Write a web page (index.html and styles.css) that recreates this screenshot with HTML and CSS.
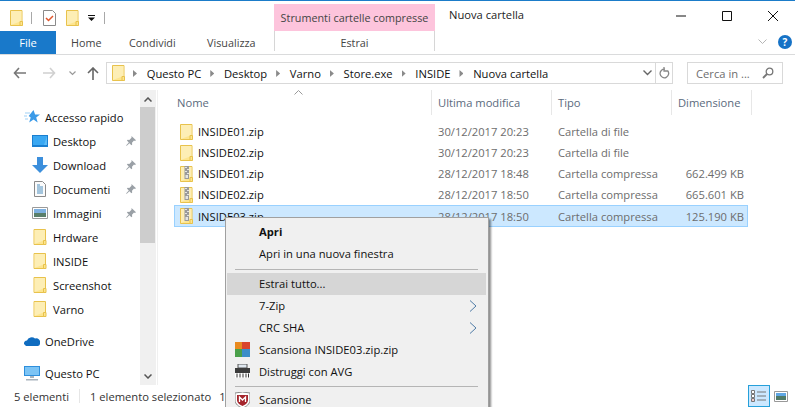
FILE: index.html
```html
<!DOCTYPE html>
<html lang="it">
<head>
<meta charset="utf-8">
<title>Nuova cartella</title>
<link rel="stylesheet" href="styles.css">
</head>
<body>
<svg class="defs" width="0" height="0" aria-hidden="true">
  <symbol id="folder" viewBox="0 0 13 16">
    <path d="M.5.5h11.500v15H.5z" fill="#fde58f" stroke="#e8c24c"/>
    <path d="M1 1h10.500v10L1 15z" fill="#fdeeb5"/>
    <path d="M10 11.500h2.500v4H10z" fill="#fde58f" stroke="#e8c24c"/>
  </symbol>
  <symbol id="zip" viewBox="0 0 13 16">
    <path d="M.5.5h11.500v15H.5z" fill="#fde58f" stroke="#e8c24c"/>
    <path d="M1 1h10.500v10L1 15z" fill="#fdeeb5"/>
    <path d="M4.500 0h4.500v13H4.500z" fill="#9a9a9a"/>
    <path d="M5 1h2v1H5zM7 3h2v1H7zM5 5h2v1H5zM7 7h2v1H7zM5.500 9h2.500v3H5.500z" fill="#e4e4e4"/>
    <path d="M10 11.500h2.500v4H10z" fill="#fde58f" stroke="#e8c24c"/>
  </symbol>
  <symbol id="pin" viewBox="0 0 10 10">
    <path d="M5.500 0l4.500 4.200-1.100.7-.9-.3L6 6.800l.2 1.700-.8.700-2-2L.8 9.700 0 9.500 2.800 6.400.9 4.500l.8-.8 1.600.2L5.500 1.800z" fill="#9aa0a6"/>
  </symbol>
</svg>
<div class="window">
  <header class="titlebar">
    <div class="qat">
      <svg class="qat-folder" width="13" height="16"><use href="#folder"/></svg>
      <span class="qat-sep first"></span>
      <svg class="qat-check" width="13" height="16" viewBox="0 0 13 16"><path d="M.5.500h9l3 3v12H.5z" fill="#fff" stroke="#8a8a8a"/><path d="M3 8l2.500 2.500L10 6" fill="none" stroke="#e0552b" stroke-width="1.500"/></svg>
      <svg class="qat-folder2" width="13" height="16"><use href="#folder"/></svg>
      <svg class="qat-drop" width="7" height="6" viewBox="0 0 7 6"><path d="M0 0h7v1H0zM0 2.500h7L3.500 6z" fill="#111"/></svg>
      <span class="qat-sep"></span>
    </div>
    <div class="context-title">Strumenti cartelle compresse</div>
    <div class="title">Nuova cartella</div>
    <div class="winbtns">
      <svg width="10" height="10" viewBox="0 0 10 10"><path d="M0 5h10" stroke="#111"/></svg>
      <svg width="10" height="10" viewBox="0 0 10 10"><path d="M.5.500h9v9h-9z" fill="none" stroke="#111"/></svg>
      <svg width="10" height="10" viewBox="0 0 10 10"><path d="M0 0l10 10M10 0L0 10" stroke="#111"/></svg>
    </div>
  </header>
  <nav class="tabs">
    <div class="tab-file">File</div>
    <div class="tab tab-home">Home</div>
    <div class="tab tab-share">Condividi</div>
    <div class="tab tab-view">Visualizza</div>
    <div class="tab tab-extract">Estrai</div>
    <div class="tabs-right">
      <svg width="9" height="6" viewBox="0 0 9 6"><path d="M.5.500l4 4 4-4" fill="none" stroke="#b5b5b5"/></svg>
      <span class="help">?</span>
    </div>
  </nav>
  <div class="addressrow">
    <div class="navbtns">
      <svg width="13" height="12" viewBox="0 0 13 12"><path d="M6 1L1.500 6 6 11M2 6h11" fill="none" stroke="#777" stroke-width="1.600"/></svg>
      <svg class="fwd" width="13" height="12" viewBox="0 0 13 12"><path d="M7 1l4.500 5L7 11M0 6h11" fill="none" stroke="#d0d0d0" stroke-width="1.600"/></svg>
      <svg class="hist" width="7" height="5" viewBox="0 0 7 5"><path d="M.5.500l3 3 3-3" fill="none" stroke="#999" stroke-width="1.200"/></svg>
      <svg class="upb" width="12" height="13" viewBox="0 0 12 13"><path d="M1 6l5-5 5 5M6 1.500V13" fill="none" stroke="#666" stroke-width="1.600"/></svg>
    </div>
    <div class="address">
      <svg class="addr-folder" width="13" height="16"><use href="#folder"/></svg>
      <span class="crumb-sep"></span><span class="crumb">Questo PC</span>
      <span class="crumb-sep"></span><span class="crumb">Desktop</span>
      <span class="crumb-sep"></span><span class="crumb">Varno</span>
      <span class="crumb-sep"></span><span class="crumb">Store.exe</span>
      <span class="crumb-sep"></span><span class="crumb">INSIDE</span>
      <span class="crumb-sep"></span><span class="crumb">Nuova cartella</span>
      <svg class="addr-drop" width="9" height="6" viewBox="0 0 9 6"><path d="M.5.500l4 4 4-4" fill="none" stroke="#666" stroke-width="1.400"/></svg>
      <span class="addr-refresh"><svg width="11" height="12" viewBox="0 0 11 12"><path d="M8.500 3.500a4.300 4.300 0 1 1-2.500-1.300M5 0v4h3.500" fill="none" stroke="#888" stroke-width="1.300"/></svg></span>
    </div>
    <div class="search">
      <span>Cerca in ...</span>
      <svg width="12" height="12" viewBox="0 0 12 12"><circle cx="7.500" cy="4.500" r="3.300" fill="none" stroke="#777" stroke-width="1.300"/><path d="M5 7l-4 4" stroke="#777" stroke-width="1.800"/></svg>
    </div>
  </div>
  <main class="body">
    <aside class="navpane">
      <div class="tree">
        <div class="node top">
          <svg class="node-ic" width="16" height="14" viewBox="0 0 16 14"><path d="M9.500 0l1.600 4.500H16l-3.800 3 1.500 5-4.200-3-4.300 3 1.500-5-2-1.500z" fill="#3a9ae8"/><path d="M1 3h5M0 6h3M1 9h3" stroke="#9fd0f5"/></svg>
          Accesso rapido
        </div>
        <div class="node sub"><svg class="node-ic" width="16" height="12" viewBox="0 0 16 12"><path d="M0 0h16v12H0z" fill="#1a7fd0"/><path d="M1 1h14v9H1z" fill="#3aa8f2"/><path d="M12 10l3-9v9z" fill="#5dbcf7"/></svg><span class="label">Desktop</span><svg class="pin" width="10" height="10"><use href="#pin"/></svg></div>
        <div class="node sub"><svg class="node-ic" width="16" height="16" viewBox="0 0 16 16"><path d="M5 0h6v8h5l-8 8-8-8h5z" fill="#3c8fdc"/></svg><span class="label">Download</span><svg class="pin" width="10" height="10"><use href="#pin"/></svg></div>
        <div class="node sub"><svg class="node-ic" width="16" height="16" viewBox="0 0 16 16"><path d="M2.500.500h8l3 3v12h-11z" fill="#fbfbfb" stroke="#8a8a8a"/><path d="M5 4h3M5 6h6M5 8h6M5 10h6M5 12h6" stroke="#4c8fbf"/></svg><span class="label">Documenti</span><svg class="pin" width="10" height="10"><use href="#pin"/></svg></div>
        <div class="node sub"><svg class="node-ic" width="16" height="12" viewBox="0 0 16 12"><path d="M.5.500h15v11H.5z" fill="#fff" stroke="#9a9a9a"/><path d="M2 2h12v4H2z" fill="#7db0e0"/><path d="M2 6h12v4H2z" fill="#5a7f6a"/></svg><span class="label">Immagini</span><svg class="pin" width="10" height="10"><use href="#pin"/></svg></div>
        <div class="node sub"><svg class="node-ic" width="16" height="16"><use href="#folder"/></svg><span class="label">Hrdware</span></div>
        <div class="node sub"><svg class="node-ic" width="16" height="16"><use href="#folder"/></svg><span class="label">INSIDE</span></div>
        <div class="node sub"><svg class="node-ic" width="16" height="16"><use href="#folder"/></svg><span class="label">Screenshot</span></div>
        <div class="node sub"><svg class="node-ic" width="16" height="16"><use href="#folder"/></svg><span class="label">Varno</span></div>
        <div class="node top gap"><svg class="node-ic" width="16" height="10" viewBox="0 0 16 10"><path d="M0 8a3 3 0 0 1 3-3.500A5 5 0 0 1 11 2.500 4 4 0 0 1 16 7.500 2.500 2.500 0 0 1 14 10H2z" fill="#0f6cc0"/></svg>OneDrive</div>
        <div class="node top gap"><svg class="node-ic" width="16" height="15" viewBox="0 0 16 15"><path d="M0 0h16v10H0z" fill="#2e8fdc"/><path d="M1 1h14v8H1z" fill="#7cc4f5"/><path d="M6 10h4v2H6zM2 13h12v1.500H2z" fill="#a9b4bd"/></svg>Questo PC</div>
      </div>
      <div class="vscroll">
        <svg width="8" height="5" viewBox="0 0 8 5"><path d="M.5 4.500L4 1l3.500 3.500" fill="none" stroke="#555" stroke-width="1.500"/></svg>
        <div class="vthumb"></div>
        <svg class="vdown" width="8" height="5" viewBox="0 0 8 5"><path d="M.5.500L4 4 7.500.5" fill="none" stroke="#555" stroke-width="1.500"/></svg>
      </div>
    </aside>
    <section class="files">
      <div class="cols">
        <div class="col col-name">Nome<svg class="sort" width="9" height="5" viewBox="0 0 9 5"><path d="M.5 4.500l4-4 4 4" fill="none" stroke="#9a9a9a"/></svg></div>
        <div class="col col-date">Ultima modifica</div>
        <div class="col col-type">Tipo</div>
        <div class="col col-size">Dimensione</div>
      </div>
      <div class="rows">
        <div class="row"><div class="cell-name"><svg width="13" height="16"><use href="#folder"/></svg>INSIDE01.zip</div><div class="cell cell-date">30/12/2017 20:23</div><div class="cell cell-type">Cartella di file</div><div class="cell cell-size"></div></div>
        <div class="row"><div class="cell-name"><svg width="13" height="16"><use href="#folder"/></svg>INSIDE02.zip</div><div class="cell cell-date">30/12/2017 20:23</div><div class="cell cell-type">Cartella di file</div><div class="cell cell-size"></div></div>
        <div class="row"><div class="cell-name"><svg width="13" height="16"><use href="#zip"/></svg>INSIDE01.zip</div><div class="cell cell-date">28/12/2017 18:48</div><div class="cell cell-type">Cartella compressa</div><div class="cell cell-size">662.499 KB</div></div>
        <div class="row"><div class="cell-name"><svg width="13" height="16"><use href="#zip"/></svg>INSIDE02.zip</div><div class="cell cell-date">28/12/2017 18:50</div><div class="cell cell-type">Cartella compressa</div><div class="cell cell-size">665.601 KB</div></div>
        <div class="row selected"><div class="cell-name"><svg width="13" height="16"><use href="#zip"/></svg>INSIDE03.zip</div><div class="cell cell-date">28/12/2017 18:50</div><div class="cell cell-type">Cartella compressa</div><div class="cell cell-size">125.190 KB</div></div>
      </div>
    </section>
  </main>
  <footer class="status">
    <span class="st-count">5 elementi</span>
    <span class="st-sep"></span>
    <span class="st-sel">1 elemento selezionato</span>
    <span class="st-size">1</span>
    <div class="views">
      <span class="view active"><svg width="16" height="13" viewBox="0 0 16 13"><path d="M.5.500h3v3h-3zM.5 4.500h3v3h-3zM.5 8.500h3v3h-3z" fill="#fff" stroke="#777"/><path d="M6 2h9M6 6h9M6 10h9" stroke="#777"/><path d="M1.500 9.500h1v1h-1z" fill="#c33"/></svg></span>
      <span class="view small"><svg width="14" height="11" viewBox="0 0 14 11"><path d="M.5.500h13v10H.5z" fill="#fff" stroke="#999"/><path d="M2 2h10v3H2z" fill="#5ea6e4"/><path d="M2 5h10v4H2z" fill="#4f7a68"/></svg></span>
    </div>
  </footer>
  <div class="menu">
    <div class="mi strong">Apri</div>
    <div class="mi">Apri in una nuova finestra</div>
    <div class="msep upper"></div>
    <div class="mi hl">Estrai tutto...</div>
    <div class="mi">7-Zip<svg class="arrow" width="8" height="12" viewBox="0 0 8 12"><path d="M1 .5L7 6l-6 5.500" fill="none" stroke="#4f7ba6"/></svg></div>
    <div class="mi">CRC SHA<svg class="arrow" width="8" height="12" viewBox="0 0 8 12"><path d="M1 .5L7 6l-6 5.500" fill="none" stroke="#4f7ba6"/></svg></div>
    <div class="mi"><svg class="mic" width="15" height="15" viewBox="0 0 15 15"><path d="M0 0h7v7H0z" fill="#e98a1f"/><path d="M7 0h8v7H7z" fill="#d9442c"/><path d="M0 7h7v8H0z" fill="#4aa04a"/><path d="M7 7h8v8H7z" fill="#3c8ec9"/></svg>Scansiona INSIDE03.zip.zip</div>
    <div class="mi"><svg class="mic" width="15" height="14" viewBox="0 0 15 14"><path d="M3 0h9v4H3z" fill="#dfe7ef" stroke="#555"/><path d="M0 4h15v5H0z" fill="#3c3c3c"/><path d="M0 9h15v5H0z" fill="#fff"/><path d="M2 9.500v4M5 9.500v4M8 9.500v4M11 9.500v4M13.500 9.500v4" stroke="#333"/></svg>Distruggi con AVG</div>
    <div class="msep lower"></div>
    <div class="mi"><svg class="mic" width="15" height="16" viewBox="0 0 15 16"><path d="M0 1l7.500-1L15 1v7c0 4-4 7-7.500 8C4 15 0 12 0 8z" fill="#fff" stroke="#8a8a8a"/><path d="M2 3h11v5c0 3-3 5-5.500 6C5 13 2 11 2 8z" fill="#a5252c"/><path d="M4.500 10V5l3 3 3-3v5" fill="none" stroke="#fff" stroke-width="1.300"/></svg>Scansione</div>
  </div>
</div>
</body>
</html>
```
FILE: styles.css
```css
* { box-sizing: border-box; }
html, body { margin: 0; padding: 0; height: 100%; overflow: hidden; background: #fff; }
body { font-family: "Open Sans", "Noto Sans", sans-serif; font-size: 11.2px; color: #111; }
.defs { position: absolute; }
svg { display: block; flex: none; }
.window { position: relative; width: 795px; height: 407px; display: flex; flex-direction: column; overflow: hidden; border-top: 1px solid #1b7cc9; }

.titlebar { height: 30px; display: flex; flex: none; }
.qat { width: 274px; display: flex; align-items: center; padding: 3px 0 0 10px; }
.qat-sep { width: 1px; height: 12px; background: #a8a8a8; margin-left: 9px; }
.qat-sep.first { margin-left: 8px; }
.qat-check { margin-left: 11px; }
.qat-folder2 { margin-left: 10px; }
.qat-drop { margin-left: 9px; }
.context-title { width: 161px; margin-top: 3px; background: #fdc4dc; display: flex; align-items: center; justify-content: center; color: #444; font-size: 10.8px; }
.title { margin-left: 14px; padding-top: 6px; color: #222; }
.winbtns { margin-left: auto; width: 138px; padding: 10px 17px 0 0; display: flex; gap: 36px; justify-content: flex-end; }
.winbtns svg { width: 10px; height: 10px; }

.tabs { height: 24px; display: flex; flex: none; border-bottom: 1px solid #dadbdc; position: relative; }
.tab-file { width: 56px; height: 23px; background: #1979ca; color: #fff; display: flex; align-items: center; justify-content: center; }
.tab { padding-top: 4px; color: #444; font-size: 10.8px; }
.tab-home { margin-left: 15px; width: 58px; }
.tab-share { width: 78px; }
.tab-view { width: 67px; }
.tab-extract { width: 161px; height: 20px; border-left: 1px solid #d6d6d6; border-right: 1px solid #d6d6d6; text-align: center; }
.tabs-right { margin-left: auto; display: flex; align-items: center; gap: 11px; padding-right: 3px; padding-bottom: 2px; }
.help { width: 14px; height: 14px; border-radius: 50%; background: #1672c6; color: #fff; font-weight: 700; font-size: 10px; display: flex; align-items: center; justify-content: center; }

.addressrow { height: 35px; flex: none; display: flex; align-items: center; padding-bottom: 1px; padding-top: 2px; }
.navbtns { width: 106px; flex: none; display: flex; align-items: center; padding-left: 13px; }
.fwd { margin-left: 17px; }
.hist { margin-left: 13px; }
.upb { margin-left: 11px; }
.address { flex: 1 1 auto; height: 22px; border: 1px solid #d9d9d9; display: flex; align-items: center; padding-left: 5px; color: #111; }
.addr-folder { margin-right: 7px; }
.crumb-sep { width: 4px; height: 7px; flex: none; margin: 1px 9.7px 0 1px; background: #8a8a8a; clip-path: polygon(0 0, 100% 50%, 0 100%); }
.crumb { margin-right: 8px; }
.addr-drop { margin-left: auto; margin-right: 3px; }
.addr-refresh { width: 17px; height: 20px; border-left: 1px solid #d9d9d9; display: flex; align-items: center; justify-content: center; }
.search { width: 96px; height: 22px; flex: none; margin: 0 12px 0 14px; border: 1px solid #d9d9d9; display: flex; align-items: center; justify-content: space-between; padding: 0 8px; color: #6d6d6d; }

.body { flex: 1 1 auto; min-height: 0; display: flex; }
.navpane { width: 158px; flex: none; display: flex; border-right: 1px solid #f0f0f0; }
.tree { flex: 1 1 auto; padding-top: 15px; }
.node { display: flex; align-items: center; height: 24px; white-space: nowrap; }
.node.top { padding-left: 24px; }
.node.top .node-ic { margin-right: 5px; }
.node.sub { padding-left: 32px; }
.node.sub .node-ic { margin-right: 5px; }
.node.gap { margin-top: 8px; height: 24px; }
.label { flex: 1 1 auto; }
.pin { margin-right: 4px; }
.vscroll { width: 16px; flex: none; margin-right: 1px; background: #f0f0f0; display: flex; flex-direction: column; align-items: center; padding-top: 7px; }
.vthumb { width: 15px; height: 136px; background: #cdcdcd; margin-top: 5px; align-self: flex-start; }
.vdown { margin-top: auto; margin-bottom: 6px; }

.files { flex: 1 1 auto; min-width: 0; padding-left: 17px; }
.cols { display: flex; height: 25px; color: #5b6a7d; }
.col { position: relative; padding-left: 6px; border-right: 1px solid #e7e7e7; display: flex; align-items: center; }
.col-name { width: 257px; padding-left: 2px; }
.col-date { width: 120px; }
.col-type { width: 120px; }
.col-size { width: 80px; }
.sort { position: absolute; left: 119px; top: 0; }
.rows { margin-top: 6px; width: 574px; margin-left: -1px; }
.row { height: 21px; display: flex; align-items: center; border: 1px solid transparent; }
.row.selected { height: 22px; background: #cce8ff; border-color: #99d1ff; }
.cell-name { width: 259px; flex: none; padding-left: 5px; display: flex; align-items: center; gap: 5px; color: #111; }
.cell { color: #6d6d6d; white-space: nowrap; }
.cell-date { width: 120px; flex: none; padding-left: 4px; }
.cell-type { width: 102px; flex: none; padding-left: 4px; }
.cell-size { flex: 1 1 auto; text-align: right; padding-right: 3px; }

.status { height: 22px; flex: none; display: flex; align-items: center; position: relative; color: #333; }
.st-count { margin-left: 14px; }
.st-sep { width: 1px; height: 14px; background: #e6e6e6; margin: 0 10px; }
.st-size { margin-left: 8px; }
.views { position: absolute; right: 5px; top: 0; display: flex; align-items: center; gap: 2px; }
.view { width: 22px; height: 22px; display: flex; align-items: center; justify-content: center; }
.view.small { width: 18px; }
.view.active { background: #cce8ff; border: 1px solid #26a0da; }

.menu { position: absolute; left: 225px; top: 216px; width: 264px; height: 200px; padding: 3px 2px 3px 1px; background: #f0f0f0; border: 1px solid #a0a0a0; box-shadow: 2px 2px 2px rgba(0,0,0,.45); color: #111; }
.mi { height: 22px; display: flex; align-items: center; padding: 0 0 2px 32px; position: relative; }
.mi.strong { font-weight: 700; }
.mi.hl { background: #d6d6d6; }
.msep { height: 1px; margin: 3px 8px; background: #b5b5b5; }
.msep.upper { margin-top: 4px; }
.msep.lower { margin-bottom: 2px; }
.mic { position: absolute; left: 8px; top: 3px; }
.arrow { position: absolute; right: 9px; top: 5px; }
```
